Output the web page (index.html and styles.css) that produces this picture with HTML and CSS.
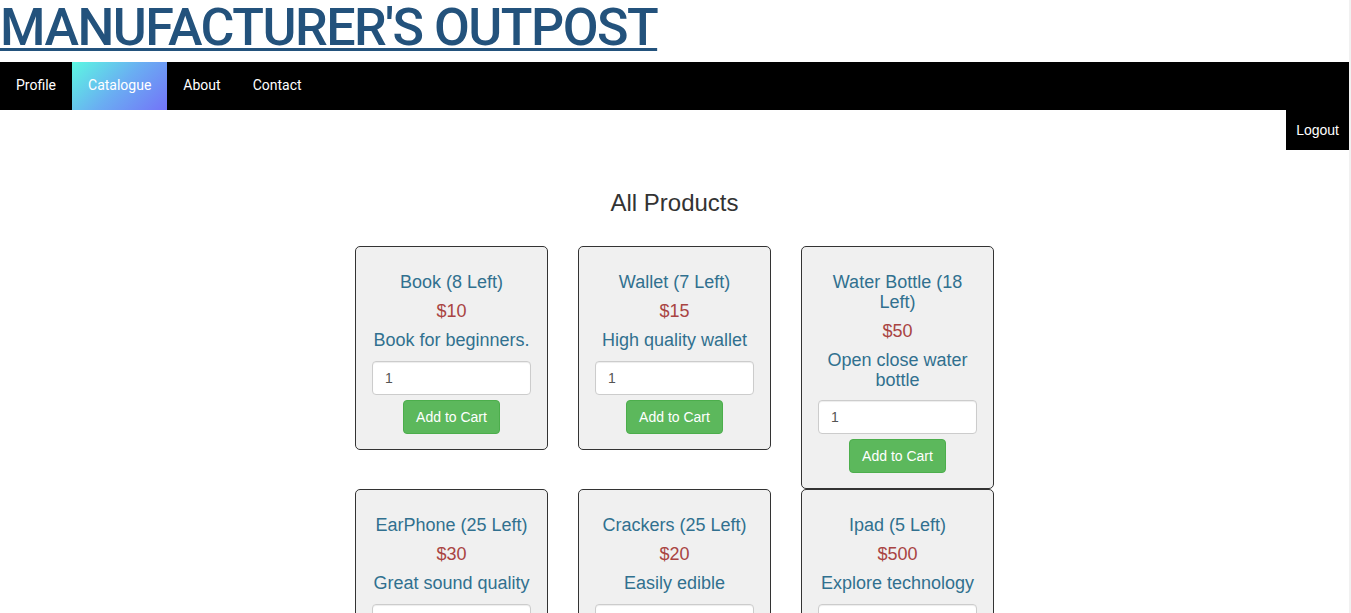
FILE: index.html
```html
<!DOCTYPE html>
<html>
<head>
<meta charset="utf-8">
<title>Manufacturer's Outpost</title>
<link rel="stylesheet" href="styles.css">
</head>
<body>
<h1 class="site-title"><a href="#">MANUFACTURER'S OUTPOST</a></h1>
<nav class="topnav">
  <a class="nav-item" href="#">Profile</a>
  <a class="nav-item active" href="#">Catalogue</a>
  <a class="nav-item" href="#">About</a>
  <a class="nav-item" href="#">Contact</a>
</nav>
<div class="logout-row"><a class="logout" href="#">Logout</a></div>
<main class="catalogue">
  <h3 class="section-title">All Products</h3>
  <div class="grid">
    <div class="card">
      <h4 class="name">Book (8 Left)</h4>
      <h4 class="price">$10</h4>
      <h4 class="desc">Book for beginners.</h4>
      <input class="qty" type="text" value="1">
      <button class="btn-add">Add to Cart</button>
    </div>
    <div class="card">
      <h4 class="name">Wallet (7 Left)</h4>
      <h4 class="price">$15</h4>
      <h4 class="desc">High quality wallet</h4>
      <input class="qty" type="text" value="1">
      <button class="btn-add">Add to Cart</button>
    </div>
    <div class="card">
      <h4 class="name">Water Bottle (18 Left)</h4>
      <h4 class="price">$50</h4>
      <h4 class="desc">Open close water bottle</h4>
      <input class="qty" type="text" value="1">
      <button class="btn-add">Add to Cart</button>
    </div>
    <div class="card">
      <h4 class="name">EarPhone (25 Left)</h4>
      <h4 class="price">$30</h4>
      <h4 class="desc">Great sound quality</h4>
      <input class="qty" type="text" value="1">
      <button class="btn-add">Add to Cart</button>
    </div>
    <div class="card">
      <h4 class="name">Crackers (25 Left)</h4>
      <h4 class="price">$20</h4>
      <h4 class="desc">Easily edible</h4>
      <input class="qty" type="text" value="1">
      <button class="btn-add">Add to Cart</button>
    </div>
    <div class="card">
      <h4 class="name">Ipad (5 Left)</h4>
      <h4 class="price">$500</h4>
      <h4 class="desc">Explore technology</h4>
      <input class="qty" type="text" value="1">
      <button class="btn-add">Add to Cart</button>
    </div>
  </div>
</main>
</body>
</html>
```

FILE: styles.css
```css
html {
  background: #f1f1f1;
}
body {
  margin: 0 2px 0 0;
  min-height: 100vh;
  background: #ffffff;
  font-family: "Liberation Sans", Arial, sans-serif;
  font-size: 14px;
  color: #333333;
}
.site-title {
  margin: 0 0 7px 0;
  font-family: Roboto, "Liberation Sans", sans-serif;
  font-weight: 500;
  font-size: 52px;
  line-height: 55px;
  letter-spacing: -1.5px;
}
.site-title a {
  color: #23527c;
  text-decoration: underline;
  text-decoration-thickness: 3px;
  text-underline-offset: 3px;
}
.topnav {
  display: flex;
  background: #000000;
  height: 48px;
}
.nav-item {
  display: block;
  padding: 13px 16px 15px;
  line-height: 20px;
  font-family: Roboto, "Liberation Sans", sans-serif;
  font-size: 14px;
  color: #ffffff;
  text-decoration: none;
}
.nav-item.active {
  background: linear-gradient(135deg, #5cf8e2 0%, #6aaef2 50%, #7373f8 100%);
}
.logout-row {
  display: flex;
  justify-content: flex-end;
}
.logout {
  display: block;
  background: #000000;
  color: #ffffff;
  text-decoration: none;
  padding: 10px 10px;
  line-height: 20px;
  font-size: 14px;
}
.catalogue {
  padding-top: 40px;
}
.section-title {
  margin: 0 0 30px 0;
  text-align: center;
  font-size: 24px;
  font-weight: 400;
  line-height: 1.1;
  color: #333333;
}
.grid {
  width: 639px;
  margin: 0 auto;
  display: flex;
  flex-wrap: wrap;
  column-gap: 30px;
  align-items: flex-start;
}
.card {
  box-sizing: border-box;
  width: 193px;
  padding: 16px 16px 15px;
  background: #f0f0f0;
  border: 1px solid #333333;
  border-radius: 5px;
  text-align: center;
}
.card h4 {
  margin: 9px 0;
  font-size: 18px;
  font-weight: 400;
  line-height: 1.1;
}
.card .name {
  margin-top: 10px;
}
.card .desc {
  margin-bottom: 10px;
}
.name, .desc {
  color: #31708f;
}
.price {
  color: #a94442;
}
.qty {
  display: block;
  box-sizing: border-box;
  width: 100%;
  height: 34px;
  margin: 0 0 5px 0;
  padding: 6px 12px;
  font-family: "Liberation Sans", Arial, sans-serif;
  font-size: 14px;
  color: #555555;
  background: #ffffff;
  border: 1px solid #cccccc;
  border-radius: 4px;
  box-shadow: inset 0 1px 1px rgba(0,0,0,0.075);
}
.btn-add {
  display: inline-block;
  padding: 6px 12px;
  font-family: "Liberation Sans", Arial, sans-serif;
  font-size: 14px;
  line-height: 20px;
  color: #ffffff;
  background: #5cb85c;
  border: 1px solid #4cae4c;
  border-radius: 4px;
  cursor: pointer;
}
```
